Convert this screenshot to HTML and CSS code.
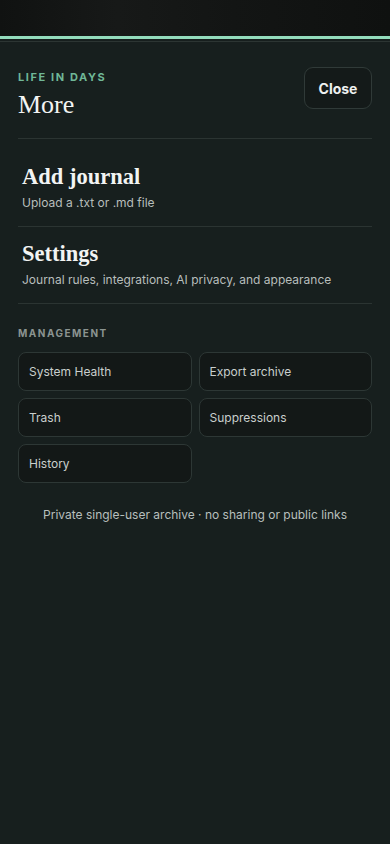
FILE: index.html
```html
<!DOCTYPE html>
<html lang="en">
  <head>
    <meta charset="UTF-8" />
    <title>More - Life in Days</title>
    <link rel="stylesheet" href="styles.css">
  </head>
  <body>
    <div class="backdrop"></div>

    <div class="sheet">
      <div class="sheet-header">
        <div>
          <div class="eyebrow">Life in Days</div>
          <h1>More</h1>
        </div>
        <button class="close-button">Close</button>
      </div>

      <a class="menu-item" href="#">
        <h2>Add journal</h2>
        <p>Upload a .txt or .md file</p>
      </a>
      <a class="menu-item" href="#">
        <h2>Settings</h2>
        <p>Journal rules, integrations, AI privacy, and appearance</p>
      </a>

      <div class="section-label">Management</div>
      <div class="tile-grid">
        <button class="tile">System Health</button>
        <button class="tile">Export archive</button>
        <button class="tile">Trash</button>
        <button class="tile">Suppressions</button>
        <button class="tile">History</button>
      </div>

      <p class="footnote">Private single-user archive · no sharing or public links</p>
    </div>
  </body>
</html>
```

FILE: styles.css
```css
body {
  font-family: "Inter", "Liberation Sans", sans-serif;
  background-color: #171f1e;
  color: #e8ecea;
  margin: 0;
  min-height: 844px;
}

.backdrop {
  height: 36px;
  background: linear-gradient(90deg, #101211 0%, #171918 30%, #131514 60%, #0f1110 100%);
}

.sheet {
  border-top: 3px solid #93dcbc;
  padding: 0 18px 40px;
}

.sheet::before {
  content: "";
  display: block;
  height: 1px;
  margin: 2px -18px 0;
  background-color: #2c3533;
}

.sheet-header {
  display: flex;
  justify-content: space-between;
  align-items: flex-start;
  padding: 25px 0 18px;
  border-bottom: 1px solid #2b3432;
}

.eyebrow {
  font-size: 11px;
  font-weight: 700;
  letter-spacing: 1.6px;
  text-transform: uppercase;
  color: #6fb797;
  line-height: 14px;
  margin-top: 3px;
}

h1 {
  font-family: "Liberation Serif", serif;
  font-weight: 400;
  font-size: 26px;
  line-height: 30px;
  margin: 6px 0 0;
  color: #f2f4f3;
}

.close-button {
  font-family: inherit;
  font-size: 14px;
  font-weight: 700;
  color: #eef1f0;
  background-color: #141a19;
  border: 1px solid #303a38;
  border-radius: 9px;
  width: 68px;
  height: 42px;
  cursor: pointer;
}

.menu-item {
  display: block;
  padding: 24px 4px 14px;
  border-bottom: 1px solid #2b3432;
  text-decoration: none;
  color: inherit;
}

.menu-item + .menu-item {
  padding-top: 13px;
}

.menu-item h2 {
  font-family: "Liberation Serif", serif;
  font-weight: 700;
  font-size: 22.5px;
  line-height: 27px;
  margin: 0;
  color: #f2f4f3;
}

.menu-item p {
  font-size: 12px;
  line-height: 18px;
  margin: 4px 0 0;
  color: #b7bebc;
}

.section-label {
  font-size: 10px;
  font-weight: 700;
  letter-spacing: 1.5px;
  text-transform: uppercase;
  color: #8b9491;
  margin: 22px 0 12px;
  line-height: 14px;
}

.tile-grid {
  display: grid;
  grid-template-columns: 1fr 1fr;
  gap: 7px 7px;
}

.tile {
  font-family: inherit;
  font-size: 12px;
  text-align: left;
  color: #c9cfcd;
  background-color: #131817;
  border: 1px solid #2d3735;
  border-radius: 8px;
  height: 39px;
  padding: 0 10px;
  cursor: pointer;
}

.footnote {
  text-align: center;
  font-size: 12px;
  color: #b8bfbd;
  margin: 24px 0 0;
}
```
